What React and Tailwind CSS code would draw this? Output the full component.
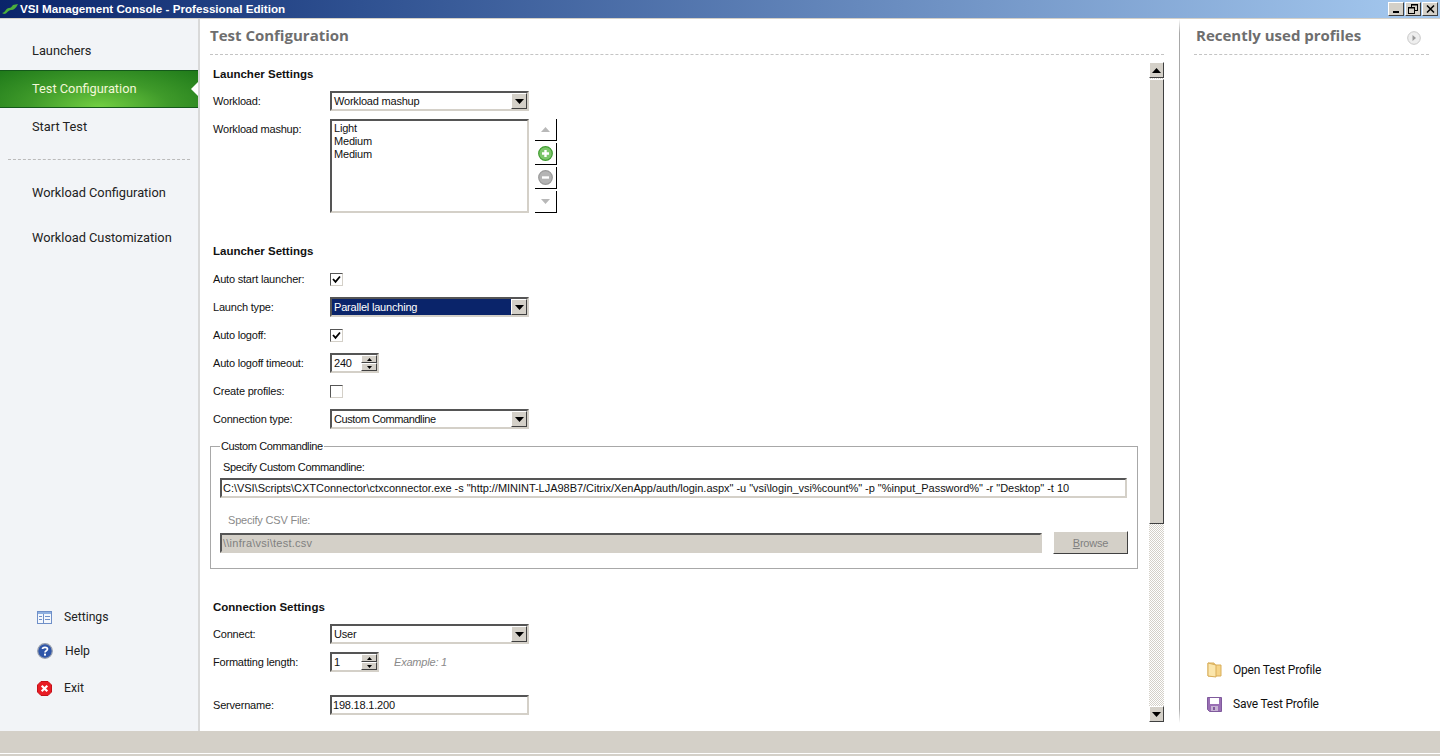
const raised = "border border-t-white border-l-white border-r-[#404040] border-b-[#404040] bg-[#d4d0c8]";
const sunken = "border-2 border-t-[#555555] border-l-[#555555] border-r-[#d4d0c8] border-b-[#d4d0c8] bg-white";

function Arrow({ up, color = "#000000" }) {
  return (
    <svg width="9" height="5" viewBox="0 0 9 5">
      <path d={up ? "M4.5 0 L9 5 L0 5 Z" : "M0 0 L9 0 L4.5 5 Z"} fill={color} />
    </svg>
  );
}

function Select({ value, selected }) {
  return (
    <div className={`flex h-5 w-[199px] items-center ${sunken}`}>
      <div className={`flex h-full flex-1 items-center pl-[2px] pt-px ${selected ? "bg-[#0a246a] text-white" : ""}`}>{value}</div>
      <div className={`flex h-4 w-4 items-center justify-center ${raised}`}>
        <Arrow />
      </div>
    </div>
  );
}

function Check({ checked }) {
  return (
    <div className={`flex h-[13px] w-[13px] items-center justify-center border border-t-[#555555] border-l-[#555555] border-r-[#d4d0c8] border-b-[#d4d0c8] bg-white`}>
      {checked && (
        <svg width="9" height="9" viewBox="0 0 9 9">
          <path d="M1 4 L3.5 6.8 L8 1.5" fill="none" stroke="#000000" strokeWidth="1.8" />
        </svg>
      )}
    </div>
  );
}

function Spinner({ value }) {
  return (
    <div className={`flex h-5 w-[49px] items-center ${sunken}`}>
      <div className="flex-1 pl-[2px] pt-px">{value}</div>
      <div className="flex h-full w-4 flex-col">
        <div className={`flex h-1/2 items-center justify-center ${raised}`}>
          <svg width="5" height="3" viewBox="0 0 5 3"><path d="M2.5 0 L5 3 L0 3 Z" fill="#000000" /></svg>
        </div>
        <div className={`flex h-1/2 items-center justify-center ${raised}`}>
          <svg width="5" height="3" viewBox="0 0 5 3"><path d="M0 0 L5 0 L2.5 3 Z" fill="#000000" /></svg>
        </div>
      </div>
    </div>
  );
}

function Row({ label, children }) {
  return (
    <div className="flex h-7 items-center">
      <div className="w-[117px] shrink-0 pt-px">{label}</div>
      {children}
    </div>
  );
}

function Heading({ children }) {
  return <div className="flex h-6 items-center pt-[2px] text-[11.5px] font-bold tracking-normal">{children}</div>;
}

function MoveButton({ children }) {
  return (
    <div className="flex h-[22px] w-[22px] items-center justify-center border-r border-b border-r-black border-b-black bg-white">
      {children}
    </div>
  );
}

function RoundIcon({ fill, ring, minus }) {
  return (
    <svg width="15" height="15" viewBox="0 0 15 15">
      <circle cx="7.5" cy="7.5" r="6.8" fill={fill} stroke={ring} strokeWidth="1.2" />
      <path d={minus ? "M4 7.5 H11" : "M4 7.5 H11 M7.5 4 V11"} stroke="#ffffff" strokeWidth="2.4" />
    </svg>
  );
}

function NavItem({ children, active }) {
  if (active) {
    return (
      <div className="relative flex h-[38px] items-center border-y border-y-[#14591a] bg-[radial-gradient(ellipse_at_50%_100%,#72cf42_0%,#3f9a2a_50%,#1f7a1a_100%)] pl-8 text-[#f2f7d8]">
        {children}
        <div className="absolute right-0 top-[11px] h-0 w-0 border-y-[7px] border-r-[7px] border-y-transparent border-r-white" />
      </div>
    );
  }
  return <div className="flex h-[38px] items-center pl-8">{children}</div>;
}

function WinButton({ children }) {
  return <div className={`flex h-[14px] w-4 items-center justify-center ${raised}`}>{children}</div>;
}

export default function App() {
  return (
    <div className="flex h-[756px] w-[1440px] flex-col overflow-hidden bg-white font-['Liberation_Sans',sans-serif] text-[11px] tracking-[-0.2px] text-[#111111]">
      {/* title bar */}
      <div className="flex h-[18px] shrink-0 items-center bg-[linear-gradient(90deg,#0a246a_0%,#2f5191_25%,#a6caf0_100%)] pl-[2px] pr-[2px]">
        <svg width="16" height="10" viewBox="0 0 16 10" className="mr-[2px]">
          <path d="M0 9 C3 9 4 4 7 4 C9 4 10 2 11 1 L16 0 C14 4 12 6 9 6 C6 6 5 10 2 10 Z" fill="#4caf3c" />
        </svg>
        <span className="text-[11.65px] font-bold tracking-normal text-white">VSI Management Console - Professional Edition</span>
        <div className="ml-auto flex gap-[1px]">
          <WinButton><div className="mt-[6px] h-[2px] w-[6px] bg-black" /></WinButton>
          <WinButton>
            <svg width="10" height="10" viewBox="0 0 10 10" fill="none" stroke="#000000">
              <rect x="3.5" y="0.5" width="6" height="6" />
              <rect x="0.5" y="3.5" width="6" height="6" fill="#d4d0c8" />
              <path d="M3 1 H10 M0 4 H7" />
            </svg>
          </WinButton>
          <WinButton>
            <svg width="9" height="8" viewBox="0 0 9 8"><path d="M1 0.5 L8 7.5 M8 0.5 L1 7.5" stroke="#000000" strokeWidth="1.5" /></svg>
          </WinButton>
        </div>
      </div>
      <div className="h-px shrink-0 bg-[#d4d0c8]" />

      <div className="flex min-h-0 flex-1">
        {/* sidebar */}
        <div className="flex w-[200px] shrink-0 flex-col justify-between border-r-2 border-r-[#d9d9d9] bg-[#f2f4f7] pb-[23px] font-['Roboto',sans-serif] text-[12.8px] tracking-normal text-[#222222]">
          <div>
            <div className="pt-[13px]">
              <NavItem>Launchers</NavItem>
              <NavItem active>Test Configuration</NavItem>
              <NavItem>Start Test</NavItem>
            </div>
            <div className="mx-2 mt-[13px] border-t border-dashed border-t-[#bbbbbb]" />
            <div className="mt-[14px]">
              <NavItem>Workload Configuration</NavItem>
              <div className="mt-[7px]">
                <NavItem>Workload Customization</NavItem>
              </div>
            </div>
          </div>
          <div className="flex flex-col pl-[37px] text-[12.2px]">
            <div className="flex h-[34px] items-center gap-3">
              <svg width="15" height="13" viewBox="0 0 15 13">
                <rect x="0.5" y="0.5" width="14" height="12" fill="#f4f7fc" stroke="#6f8fc8" />
                <rect x="1" y="1" width="13" height="2" fill="#8fb0e0" />
                <path d="M2 5.5 H5 M2 8.5 H5 M6.5 3 V12 M8 5.5 H13 M8 8.5 H13" stroke="#6f8fc8" />
              </svg>
              Settings
            </div>
            <div className="flex h-[34px] items-center gap-3">
              <svg width="16" height="16" viewBox="0 0 16 16">
                <circle cx="8" cy="8" r="7.3" fill="#2f55a8" stroke="#9aa0ad" strokeWidth="1.2" />
                <path d="M5.5 6 C5.5 3.8 10.5 3.8 10.5 6 C10.5 7.8 8 7.6 8 9.6" fill="none" stroke="#ffffff" strokeWidth="1.7" />
                <rect x="7" y="10.6" width="2" height="2" fill="#ffffff" />
              </svg>
              Help
            </div>
            <div className="flex h-[40px] items-center gap-3">
              <svg width="15" height="15" viewBox="0 0 15 15">
                <path d="M4 0.5 H11 L14.5 4 V11 L11 14.5 H4 L0.5 11 V4 Z" fill="#e81c24" stroke="#c41018" />
                <path d="M4.7 4.7 L10.3 10.3 M10.3 4.7 L4.7 10.3" stroke="#ffffff" strokeWidth="2.2" />
              </svg>
              Exit
            </div>
          </div>
        </div>

        {/* centre column */}
        <div className="flex w-[979px] shrink-0 flex-col pl-[10px] pr-[15px]">
          <div className="flex h-[36px] shrink-0 items-center border-b border-dashed border-b-[#c4c4c4] pb-[3px] font-['Open_Sans',sans-serif] text-[15px] font-bold tracking-normal text-[#6e6e6e]">
            Test Configuration
          </div>
          <div className="mt-[7px] flex h-[660px] shrink-0">
            <div className="w-[939px] shrink-0 overflow-hidden">
              <div className="pl-[3px]">
                <Heading>Launcher Settings</Heading>
                <div className="mt-[5px] flex h-5 items-center">
                  <div className="w-[117px] shrink-0 pt-px">Workload:</div>
                  <Select value="Workload mashup" />
                </div>
                <div className="mt-2 flex">
                  <div className="w-[117px] shrink-0 pt-[2px]">Workload mashup:</div>
                  <div className={`h-[94px] w-[199px] pl-[2px] pt-px leading-[13px] ${sunken}`}>
                    <div>Light</div>
                    <div>Medium</div>
                    <div>Medium</div>
                  </div>
                  <div className="ml-[6px] flex flex-col gap-[2px]">
                    <MoveButton><Arrow up color="#b8b8b8" /></MoveButton>
                    <MoveButton><RoundIcon fill="#7cc66a" ring="#3f9c2f" /></MoveButton>
                    <MoveButton><RoundIcon fill="#b4b4b4" ring="#999999" minus /></MoveButton>
                    <MoveButton><Arrow color="#b8b8b8" /></MoveButton>
                  </div>
                </div>
                <div className="mt-[26px]">
                  <Heading>Launcher Settings</Heading>
                </div>
                <div className="mt-[2px]">
                  <Row label="Auto start launcher:"><Check checked /></Row>
                  <Row label="Launch type:"><Select value="Parallel launching" selected /></Row>
                  <Row label="Auto logoff:"><Check checked /></Row>
                  <Row label="Auto logoff timeout:"><Spinner value="240" /></Row>
                  <Row label="Create profiles:"><Check /></Row>
                  <Row label="Connection type:"><Select value={<span className="tracking-[-0.4px]">Custom Commandline</span>} /></Row>
                </div>
              </div>
              <fieldset className="mt-[7px] h-[129px] w-[927px] border border-[#a8a8a8] pl-[9px] pr-[9px]">
                <legend className="px-[1px] leading-[13px] tracking-[-0.4px]">Custom Commandline</legend>
                <div className="mt-2 pl-[3px] leading-[13px] tracking-[-0.35px]">Specify Custom Commandline:</div>
                <div className={`mt-1 flex h-5 w-[907px] items-center whitespace-nowrap pl-[1px] pt-px tracking-[-0.03px] ${sunken}`}>
                  {'C:\\VSI\\Scripts\\CXTConnector\\ctxconnector.exe -s "http://MININT-LJA98B7/Citrix/XenApp/auth/login.aspx" -u "vsi\\login_vsi%count%" -p "%input_Password%" -r "Desktop" -t 10'}
                </div>
                <div className="mt-4 pl-2 leading-[13px] text-[#8a8a8a]">Specify CSV File:</div>
                <div className="mt-[6px] flex items-start">
                  <div className="flex h-5 w-[822px] items-center border-2 border-t-[#555555] border-l-[#555555] border-r-[#d4d0c8] border-b-[#d4d0c8] bg-[#d4d0c8] pl-[1px] pt-px tracking-[0.25px] text-[#808080]">
                    {"\\\\infra\\vsi\\test.csv"}
                  </div>
                  <div className={`-mt-[2px] ml-[11px] flex h-[23px] w-[75px] items-center justify-center pt-px text-[#808080] ${raised}`}>
                    <span><span className="underline">B</span>rowse</span>
                  </div>
                </div>
              </fieldset>
              <div className="pl-[3px]">
                <div className="mt-[26px]">
                  <Heading>Connection Settings</Heading>
                </div>
                <div className="mt-[1px]">
                  <Row label="Connect:"><Select value="User" /></Row>
                  <Row label="Formatting length:">
                    <Spinner value="1" />
                    <span className="ml-[15px] italic text-[#8a8a8a]">Example: 1</span>
                  </Row>
                </div>
                <div className="mt-[15px]">
                  <Row label="Servername:">
                    <div className={`flex h-5 w-[199px] items-center pl-[1px] pt-px ${sunken}`}>198.18.1.200</div>
                  </Row>
                </div>
              </div>
            </div>
            {/* scrollbar */}
            <div className="flex w-[15px] shrink-0 flex-col bg-[repeating-conic-gradient(#d4d0c8_0_25%,#ffffff_0_50%)] bg-[length:2px_2px]">
              <div className={`flex h-4 shrink-0 items-center justify-center ${raised}`}><Arrow up /></div>
              <div className={`mt-px h-[445px] shrink-0 ${raised}`} />
              <div className={`mt-auto flex h-4 shrink-0 items-center justify-center ${raised}`}><Arrow /></div>
            </div>
          </div>
        </div>

        {/* right panel */}
        <div className="flex flex-1 flex-col border-l-0 pb-[8px]">
          <div className="flex h-full">
            <div className="h-full w-px shrink-0 bg-[linear-gradient(180deg,#ffffff_0%,#a8a8a8_2%,#a8a8a8_98%,#ffffff_100%)]" />
            <div className="flex flex-1 flex-col pl-[14px] pr-[11px]">
              <div className="flex h-[36px] shrink-0 items-center justify-between border-b border-dashed border-b-[#c4c4c4] pb-[3px] pl-[2px] font-['Open_Sans',sans-serif] text-[15px] font-bold tracking-normal text-[#6e6e6e]">
                Recently used profiles
                <svg width="14" height="14" viewBox="0 0 14 14" className="mr-2 mt-[5px]">
                  <circle cx="7" cy="7" r="6.3" fill="#eeeeee" stroke="#c8c8c8" />
                  <path d="M5.5 4 L9 7 L5.5 10 Z" fill="#999999" />
                </svg>
              </div>
              <div className="mt-auto flex flex-col pb-[2px] pl-[13px] font-['Roboto',sans-serif] text-[12px] tracking-[-0.2px]">
                <div className="flex h-[34px] items-center gap-[11px]">
                  <svg width="15" height="16" viewBox="0 0 15 16">
                    <path d="M1 1 H7 L8 3 H14 V14 H1 Z" fill="#f6d488" stroke="#d9ae5a" />
                    <path d="M1 1 L9 3 V15 L1 14 Z" fill="#fbe6ac" stroke="#d9ae5a" />
                  </svg>
                  Open Test Profile
                </div>
                <div className="flex h-[34px] items-center gap-[11px]">
                  <svg width="15" height="15" viewBox="0 0 15 15">
                    <path d="M0.5 0.5 H14.5 V14.5 H2.5 L0.5 12.5 Z" fill="#9a6fb4" stroke="#7f5a9c" />
                    <rect x="3" y="1" width="9" height="6" fill="#ffffff" />
                    <rect x="4" y="9" width="7" height="5" fill="#c8b4d4" />
                    <rect x="6" y="10" width="2" height="3" fill="#7f5a9c" />
                  </svg>
                  Save Test Profile
                </div>
              </div>
            </div>
          </div>
        </div>
      </div>

      {/* status bar */}
      <div className="h-[22px] shrink-0 bg-[#d4d0c8]" />
      <div className="h-px shrink-0 bg-white" />
      <div className="h-[2px] shrink-0 bg-[#d4d0c8]" />
    </div>
  );
}
